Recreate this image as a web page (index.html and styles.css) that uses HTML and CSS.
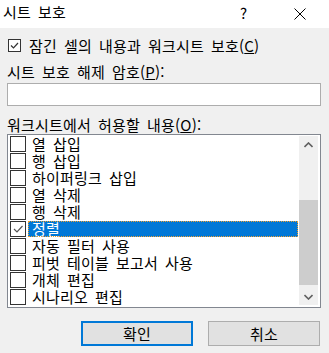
FILE: index.html
```html
<!DOCTYPE html>
<html lang="ko">
<head>
    <meta charset="UTF-8">
    <title>시트 보호</title>
    <link rel="stylesheet" href="styles.css">
</head>
<body>
    <div class="dialog">
        <div class="titlebar">
            <span class="title">시트 보호</span>
            <span class="help">?</span>
            <span class="close">
                <svg width="12" height="12" viewBox="0 0 12 12"><path d="M0.5 0.5 L11.5 11.5 M11.5 0.5 L0.5 11.5" stroke="#000" stroke-width="1" fill="none"/></svg>
            </span>
        </div>
        <div class="content">
            <div class="check-row">
                <span class="box small checked">
                    <svg width="11" height="11" viewBox="0 0 11 11"><path d="M2 5.5 L4.5 8 L9 3" stroke="#333" stroke-width="1.2" fill="none"/></svg>
                </span>
                <span>잠긴 셀의 내용과 워크시트 보호(<u>C</u>)</span>
            </div>
            <div class="field-label">시트 보호 해제 암호(<u>P</u>):</div>
            <div class="input"></div>
            <div class="field-label list-label">워크시트에서 허용할 내용(<u>O</u>):</div>
            <div class="listbox">
                <div class="items">
                    <div class="item"><span class="box"></span><span class="text">열 삽입</span></div>
                    <div class="item"><span class="box"></span><span class="text">행 삽입</span></div>
                    <div class="item"><span class="box"></span><span class="text">하이퍼링크 삽입</span></div>
                    <div class="item"><span class="box"></span><span class="text">열 삭제</span></div>
                    <div class="item"><span class="box"></span><span class="text">행 삭제</span></div>
                    <div class="item"><span class="box checked"><svg width="14" height="14" viewBox="0 0 14 14"><path d="M3 7 L6 10 L11.5 4" stroke="#555" stroke-width="1.2" fill="none"/></svg></span><span class="text selected">정렬</span></div>
                    <div class="item"><span class="box"></span><span class="text">자동 필터 사용</span></div>
                    <div class="item"><span class="box"></span><span class="text">피벗 테이블 보고서 사용</span></div>
                    <div class="item"><span class="box"></span><span class="text">개체 편집</span></div>
                    <div class="item"><span class="box"></span><span class="text">시나리오 편집</span></div>
                </div>
                <div class="scrollbar">
                    <div class="arrow">
                        <svg width="9" height="6" viewBox="0 0 9 6"><path d="M0.5 5 L4.5 1 L8.5 5" stroke="#606060" stroke-width="1.6" fill="none"/></svg>
                    </div>
                    <div class="track">
                        <div class="thumb"></div>
                    </div>
                    <div class="arrow">
                        <svg width="9" height="6" viewBox="0 0 9 6"><path d="M0.5 1 L4.5 5 L8.5 1" stroke="#606060" stroke-width="1.6" fill="none"/></svg>
                    </div>
                </div>
            </div>
            <div class="buttons">
                <div class="button default">확인</div>
                <div class="button">취소</div>
            </div>
        </div>
    </div>
</body>
</html>
```

FILE: styles.css
```css
body {
    margin: 0;
    font-family: "Noto Sans CJK KR", "Noto Sans", sans-serif;
    font-size: 15px;
    color: #000;
    background-color: #f0f0f0;
}
.dialog {
    width: 329px;
    height: 353px;
    background-color: #f0f0f0;
    letter-spacing: 0.2px;
    word-spacing: 2.6px;
}
.titlebar {
    height: 28px;
    background-color: #fff;
    display: flex;
    align-items: center;
    line-height: 17px;
}
.title {
    margin-left: 3px;
    margin-top: -5px;
    flex: 1;
}
.help {
    width: 10px;
    margin-right: 44px;
    margin-top: -3px;
}
.close {
    width: 12px;
    height: 12px;
    margin-right: 23px;
    margin-top: -1px;
}
.close svg {
    display: block;
}
.content {
    padding: 0 8px 0 7px;
}
.check-row {
    display: flex;
    align-items: center;
    gap: 8px;
    height: 17px;
    line-height: 17px;
    margin-top: 9px;
    margin-left: 1px;
}
.box {
    width: 14px;
    height: 14px;
    border: 1px solid #333;
    background-color: #fff;
    display: flex;
    align-items: center;
    justify-content: center;
    flex: none;
}
.box.small {
    width: 11px;
    height: 11px;
}
.box svg {
    display: block;
}
.field-label {
    height: 17px;
    line-height: 17px;
    margin-top: 9px;
}
.input {
    margin-top: 3px;
    height: 21px;
    border: 1px solid #adadad;
    background-color: #fff;
}
.list-label {
    margin-top: 10px;
}
.listbox {
    margin-top: 1px;
    height: 172px;
    border: 1px solid #828790;
    background-color: #fff;
    display: flex;
    padding-right: 2px;
}
.items {
    flex: 1;
    padding-left: 2px;
}
.item {
    height: 17px;
    display: flex;
    align-items: center;
    line-height: 16px;
}
.item .text {
    margin-left: 2px;
    padding: 0 4px;
    height: 16px;
    box-sizing: border-box;
}
.item .text.selected {
    flex: 1;
    background-color: #0078d7;
    color: #fff;
    outline: 1px dotted #f0a030;
    outline-offset: -1px;
    margin-right: 1px;
}
.scrollbar {
    width: 19px;
    margin-top: 1px;
    margin-bottom: 2px;
    background-color: #f0f0f0;
    display: flex;
    flex-direction: column;
}
.arrow {
    height: 17px;
    display: flex;
    align-items: center;
    justify-content: center;
}
.track {
    flex: 1;
    display: flex;
    flex-direction: column;
}
.thumb {
    margin-top: 47px;
    height: 85px;
    background-color: #cdcdcd;
}
.buttons {
    display: flex;
    justify-content: flex-end;
    gap: 15px;
    margin-top: 13px;
    margin-right: 1px;
}
.button {
    width: 110px;
    height: 23px;
    line-height: 23px;
    text-align: center;
    background-color: #e1e1e1;
    border: 1px solid #adadad;
}
.button.default {
    width: 108px;
    height: 21px;
    line-height: 21px;
    border: 2px solid #0078d7;
}
```
